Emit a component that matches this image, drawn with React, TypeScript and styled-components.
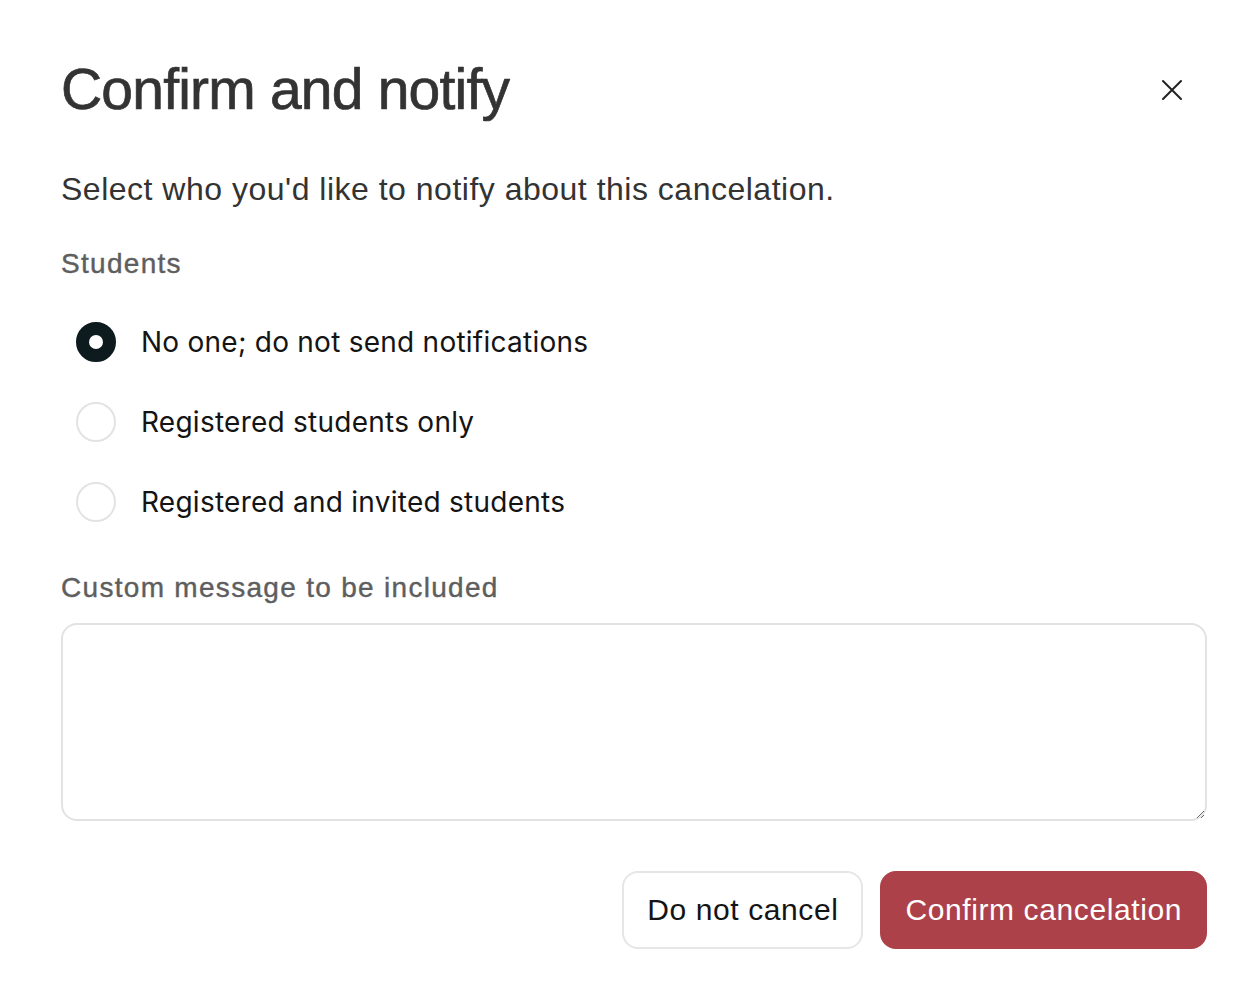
import { useState } from "react";
import styled, { createGlobalStyle } from "styled-components";

const GlobalStyle = createGlobalStyle`
  html, body {
    margin: 0;
    padding: 0;
    background: #ffffff;
  }
  body {
    font-family: "Liberation Sans", Arial, sans-serif;
    -webkit-font-smoothing: antialiased;
  }
`;

const Modal = styled.div`
  display: flex;
  flex-direction: column;
  padding: 61px 51px 0 61px;
  background: #ffffff;
`;

const Header = styled.div`
  display: flex;
  align-items: center;
  justify-content: space-between;
`;

const Title = styled.h1`
  margin: 0;
  font-size: 57px;
  line-height: 57px;
  font-weight: 400;
  letter-spacing: -0.8px;
  color: #333333;
  -webkit-text-stroke: 0.7px #333333;
`;

const CloseButton = styled.button`
  display: flex;
  align-items: center;
  justify-content: center;
  width: 40px;
  height: 40px;
  margin-right: 15px;
  padding: 0;
  border: none;
  background: none;
  color: #222222;
  cursor: pointer;
`;

const Intro = styled.p`
  margin: 51px 0 0;
  font-size: 32px;
  line-height: 40px;
  letter-spacing: 0.5px;
  color: #333333;
`;

const GroupLabel = styled.div<{ $gap: number }>`
  margin-top: ${(p) => p.$gap}px;
  font-size: 28px;
  line-height: 32px;
  letter-spacing: 1.3px;
  color: #5e5e5e;
  -webkit-text-stroke: 0.4px #5e5e5e;
`;

const Options = styled.div`
  display: flex;
  flex-direction: column;
  gap: 40px;
  margin: 42px 0 0 15px;
`;

const Option = styled.label`
  display: flex;
  align-items: center;
  gap: 25px;
  height: 40px;
  cursor: pointer;
  font-family: Inter, "Liberation Sans", sans-serif;
  font-size: 28px;
  letter-spacing: 0.25px;
  color: #141414;
`;

const Radio = styled.span<{ $checked: boolean }>`
  display: flex;
  align-items: center;
  justify-content: center;
  box-sizing: border-box;
  width: 40px;
  height: 40px;
  border-radius: 50%;
  flex-shrink: 0;
  border: 2px solid ${(p) => (p.$checked ? "#0d1b1e" : "#e3e3e3")};
  background: ${(p) => (p.$checked ? "#0d1b1e" : "#ffffff")};

  &::after {
    content: "";
    width: 14px;
    height: 14px;
    border-radius: 50%;
    background: #ffffff;
    display: ${(p) => (p.$checked ? "block" : "none")};
  }
`;

const MessageBox = styled.textarea`
  box-sizing: border-box;
  width: 100%;
  height: 198px;
  margin-top: 19px;
  padding: 16px 20px;
  border: 2px solid #e2e2e2;
  border-radius: 16px;
  font-family: inherit;
  font-size: 28px;
  color: #222222;
  outline: none;
`;

const Actions = styled.div`
  display: flex;
  justify-content: flex-end;
  gap: 17px;
  margin-top: 50px;
`;

const Button = styled.button<{ $primary?: boolean }>`
  box-sizing: border-box;
  height: 78px;
  padding: 0 23px;
  border-radius: 16px;
  border: 2px solid ${(p) => (p.$primary ? "#ad4149" : "#e6e6e6")};
  background: ${(p) => (p.$primary ? "#ad4149" : "#ffffff")};
  color: ${(p) => (p.$primary ? "#ffffff" : "#141414")};
  font-family: "Liberation Sans", Arial, sans-serif;
  font-size: 30px;
  letter-spacing: 0.6px;
  cursor: pointer;
`;

const choices = [
  "No one; do not send notifications",
  "Registered students only",
  "Registered and invited students",
];

export default function App() {
  const [selected, setSelected] = useState(0);
  const [message, setMessage] = useState("");

  return (
    <>
      <GlobalStyle />
      <Modal>
        <Header>
          <Title>Confirm and notify</Title>
          <CloseButton aria-label="Close">
            <svg width="24" height="24" viewBox="0 0 24 24" fill="none">
              <path d="M3 3L21 21M21 3L3 21" stroke="currentColor" strokeWidth="2" strokeLinecap="round" />
            </svg>
          </CloseButton>
        </Header>
        <Intro>Select who you'd like to notify about this cancelation.</Intro>
        <GroupLabel $gap={39}>Students</GroupLabel>
        <Options>
          {choices.map((choice, i) => (
            <Option key={choice} onClick={() => setSelected(i)}>
              <Radio $checked={selected === i} />
              {choice}
            </Option>
          ))}
        </Options>
        <GroupLabel $gap={50}>Custom message to be included</GroupLabel>
        <MessageBox value={message} onChange={(e) => setMessage(e.target.value)} />
        <Actions>
          <Button>Do not cancel</Button>
          <Button $primary>Confirm cancelation</Button>
        </Actions>
      </Modal>
    </>
  );
}
